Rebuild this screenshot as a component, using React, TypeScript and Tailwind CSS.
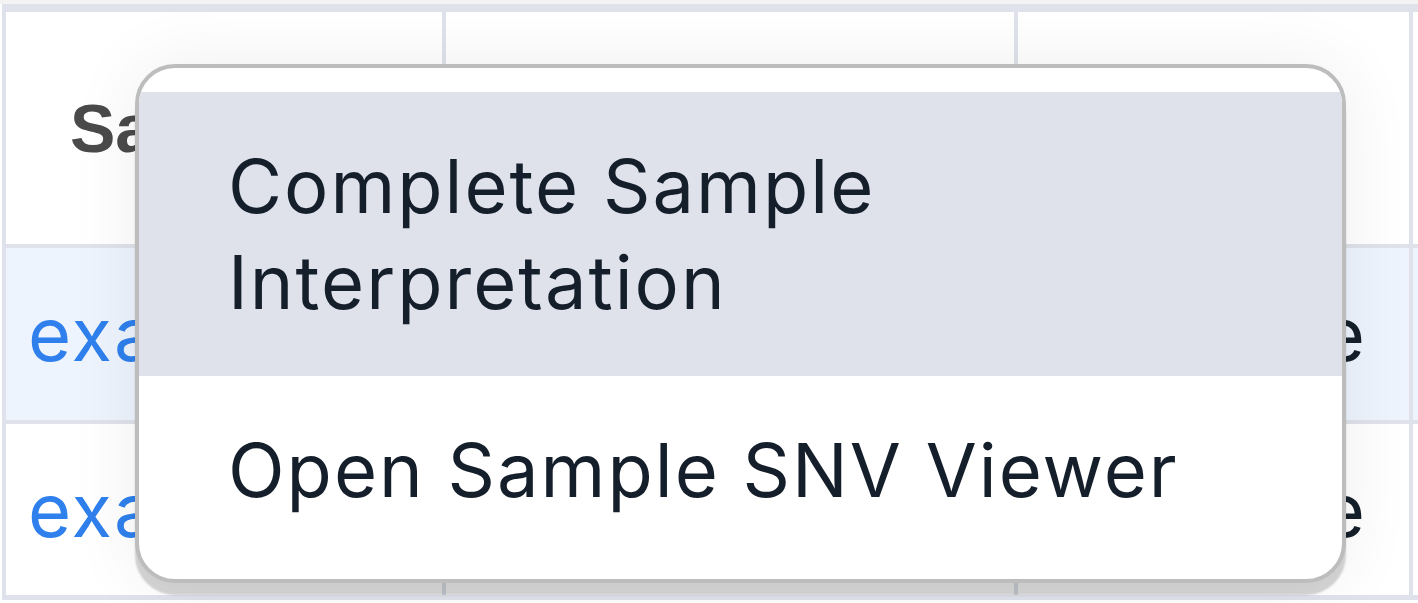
import React from "react";

const inter = { fontFamily: "Inter, 'Noto Sans', sans-serif" } as const;

export default function App() {
  return (
    <div className="relative w-[1418px] h-[603px] overflow-hidden bg-white">
      <div className="h-[4px] bg-[#f3f3f4]" />
      <div className="ml-[2px] bg-[#dfe2ea] pt-[8px] pl-[4px] pb-[5px]">
        <div className="grid grid-cols-[436px_568px_391px_1fr] grid-rows-[232px_172px_171px] gap-[4px]">
          {/* header */}
          <div className="bg-white flex items-center pl-[64px]">
            <span
              className="text-[68px] font-bold text-[#4a4a4a] leading-none whitespace-nowrap"
              style={{ fontFamily: "'Liberation Sans', Arial, sans-serif" }}
            >
              Sample ID
            </span>
          </div>
          <div className="bg-white" />
          <div className="bg-white" />
          <div className="bg-white" />
          {/* row 1 */}
          <div className="bg-[#edf4fe] flex items-center pl-[22px]">
            <span className="text-[74px] leading-[96px] tracking-[2px] text-[#2f80ed] whitespace-nowrap" style={inter}>
              example_01
            </span>
          </div>
          <div className="bg-[#edf4fe]" />
          <div className="bg-[#edf4fe] flex items-center justify-end pr-[42px]">
            <span className="text-[74px] leading-[96px] tracking-[2px] text-[#151f2b] whitespace-nowrap" style={inter}>
              Complete
            </span>
          </div>
          <div className="bg-[#edf4fe]" />
          {/* row 2 */}
          <div className="bg-white flex items-center pl-[22px]">
            <span className="text-[74px] leading-[96px] tracking-[2px] text-[#2f80ed] whitespace-nowrap" style={inter}>
              example_02
            </span>
          </div>
          <div className="bg-white" />
          <div className="bg-white flex items-center justify-end pr-[42px]">
            <span className="text-[74px] leading-[96px] tracking-[2px] text-[#151f2b] whitespace-nowrap" style={inter}>
              Complete
            </span>
          </div>
          <div className="bg-white" />
        </div>
      </div>

      {/* dropdown menu */}
      <div
        className="absolute left-[135px] top-[64px] w-[1211px] h-[519px] rounded-[40px] border-[4px] border-[#bdbdbd] bg-white pt-[24px] overflow-hidden shadow-[0_12px_2px_rgba(0,0,0,0.17),0_0_70px_rgba(0,0,0,0.07)]"
        style={inter}
      >
        <div className="bg-[#dfe2ea] h-[284px] pl-[89px] pt-[46px] text-[74px] leading-[96px] tracking-[2px] text-[#151f2b]">
          Complete Sample
          <br />
          Interpretation
        </div>
        <div className="h-[188px] pl-[89px] pt-[46px] text-[74px] leading-[96px] tracking-[2px] text-[#151f2b] whitespace-nowrap">
          Open Sample SNV Viewer
        </div>
      </div>
    </div>
  );
}
